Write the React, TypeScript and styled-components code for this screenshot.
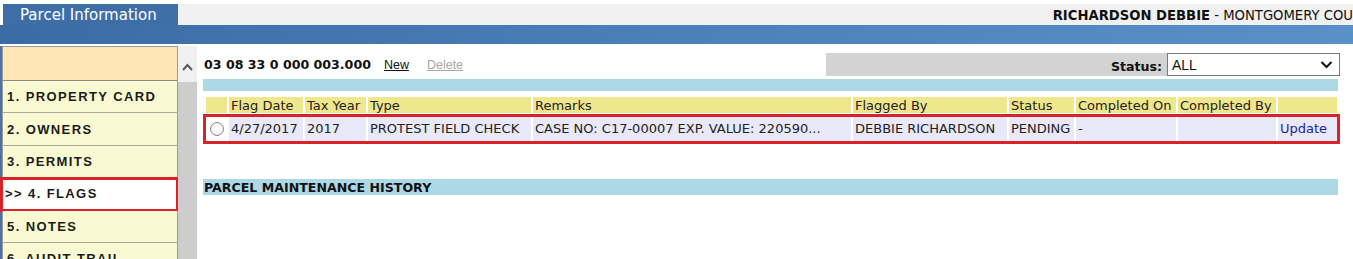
import React from "react";
import styled, { createGlobalStyle } from "styled-components";

const GlobalStyle = createGlobalStyle`
  html, body { margin: 0; padding: 0; background: #ffffff; }
  body { font-family: "DejaVu Sans", Verdana, sans-serif; overflow: hidden; }
  * { box-sizing: border-box; }
`;

const Page = styled.div`
  width: 1353px;
  height: 259px;
  overflow: hidden;
  background: #ffffff;
`;

const TopStrip = styled.div`
  display: flex;
  height: 25px;
  padding-top: 4px;
`;

const Tab = styled.div`
  flex: 0 0 175px;
  margin-left: 3px;
  background: #3d6ea6;
  color: #ffffff;
  font-size: 15px;
  line-height: 23px;
  padding-left: 17px;
  white-space: nowrap;
`;

const UserInfo = styled.div`
  flex: 1;
  background: #f0f0f0;
  text-align: right;
  font-size: 13.2px;
  line-height: 23px;
  color: #111;
  white-space: nowrap;
  b { font-weight: bold; }
`;

const Band = styled.div`
  height: 19px;
  background: linear-gradient(to right, #3b6ba4 0%, #4b80ba 50%, #5a90c9 100%);
`;

const Body = styled.div`
  display: flex;
  padding-top: 2px;
  height: 215px;
  overflow: hidden;
`;

const Sidebar = styled.div`
  flex: 0 0 178px;
  border-left: 2px solid #4a72a6;
  display: flex;
  flex-direction: column;
`;

const SideHead = styled.div`
  flex: 0 0 35px;
  background: #ffe4b5;
  border: 1px solid #9a9a9a;
  border-bottom-color: #8a8a8a;
`;

const SideItem = styled.div<{ $active?: boolean }>`
  flex: 0 0 32.4px;
  display: flex;
  align-items: center;
  padding-left: ${(p) => (p.$active ? "3px" : "4px")};
  background: ${(p) => (p.$active ? "#ffffff" : "#fafad2")};
  border-left: 1px solid #9a9a9a;
  border-right: 1px solid #9a9a9a;
  border-bottom: 1px solid #a8a8a0;
  font-family: "Liberation Sans", Arial, sans-serif;
  font-weight: bold;
  font-size: 13px;
  letter-spacing: 1.4px;
  color: #1b1b1b;
  white-space: nowrap;
  ${(p) =>
    p.$active
      ? `outline: 3px solid #d8232a; outline-offset: -2px; margin-left: -1px;`
      : ""}
`;

const Scrollbar = styled.div`
  flex: 0 0 19px;
  display: flex;
  flex-direction: column;
  background: #cdcdcd;
`;

const ScrollButton = styled.div`
  flex: 0 0 36px;
  background: #f0f0f0;
  display: flex;
  align-items: center;
  justify-content: center;
  padding-top: 6px;
`;

const ScrollThumb = styled.div`
  flex: 1;
  background: #cdcdcd;
`;

const Main = styled.div`
  flex: 0 0 1143px;
  padding-left: 6px;
  padding-top: 7px;
`;

const TopRow = styled.div`
  display: flex;
  align-items: center;
  height: 23px;
`;

const ParcelId = styled.span`
  font-weight: bold;
  font-size: 12.6px;
  color: #111;
  padding-left: 1px;
`;

const LinkText = styled.span<{ $disabled?: boolean }>`
  font-family: "Liberation Sans", Arial, sans-serif;
  font-size: 12.5px;
  text-decoration: underline;
  color: ${(p) => (p.$disabled ? "#a6a6a6" : "#111")};
  margin-left: ${(p) => (p.$disabled ? "18px" : "13px")};
`;

const StatusArea = styled.div`
  margin-left: auto;
  display: flex;
  align-items: stretch;
  height: 23px;
`;

const StatusLabelBox = styled.div`
  width: 341px;
  background: #d3d3d3;
  display: flex;
  align-items: flex-end;
  justify-content: flex-end;
  padding: 0 5px 2px 0;
  font-weight: bold;
  font-size: 12.6px;
  color: #111;
`;

const SelectBox = styled.div`
  width: 173px;
  border: 1px solid #7a7a7a;
  background: #ffffff;
  display: flex;
  align-items: center;
  justify-content: space-between;
  padding: 0 6px 0 4px;
  font-family: "Liberation Sans", Arial, sans-serif;
  font-size: 14px;
  color: #111;
`;

const BlueBar = styled.div`
  width: 1135px;
  background: #add8e6;
  margin-top: 3px;
  height: 12px;
`;

const SectionBar = styled(BlueBar)`
  height: 16px;
  margin-top: 38px;
  font-weight: bold;
  font-size: 12.6px;
  line-height: 17px;
  color: #111;
  padding-left: 1px;
`;

const cols = "21px 74px 61px 163px 318px 154px 65px 100px 98px 59px";

const Table = styled.div`
  margin-top: 6px;
  margin-left: 3px;
  width: 1131px;
  display: flex;
  flex-direction: column;
  gap: 3px;
`;

const HeaderRow = styled.div`
  display: grid;
  grid-template-columns: ${cols};
  column-gap: 2px;
  height: 16px;
`;

const HeadCell = styled.div`
  background: #f0e68c;
  font-size: 13px;
  line-height: 17px;
  padding-left: 2px;
  color: #222;
  white-space: nowrap;
  overflow: hidden;
`;

const DataRow = styled.div`
  display: grid;
  grid-template-columns: ${cols};
  column-gap: 2px;
  height: 24px;
  margin-top: 1px;
  outline: 3px solid #da2229;
  outline-offset: 0px;
`;

const DataCell = styled.div<{ $link?: boolean }>`
  background: #e8e8f8;
  font-size: 13px;
  line-height: 24px;
  padding-left: 2px;
  color: ${(p) => (p.$link ? "#1f1fa3" : "#222")};
  white-space: nowrap;
  overflow: hidden;
`;

const RadioCell = styled.div`
  background: #ffffff;
  display: flex;
  align-items: center;
  justify-content: center;
  padding-left: 1px;
`;

const Radio = styled.span`
  width: 14px;
  height: 14px;
  border-radius: 50%;
  border: 1px solid #8a8a8a;
  background: radial-gradient(circle at 50% 40%, #ffffff 0%, #f2f2f2 60%, #e0e0e0 100%);
`;

const UpChevron = () => (
  <svg width="11" height="8" viewBox="0 0 11 8">
    <path d="M1 7 L5.5 2 L10 7" fill="none" stroke="#5a5a5a" strokeWidth="2" />
  </svg>
);

const DownChevron = () => (
  <svg width="13" height="9" viewBox="0 0 13 9">
    <path d="M1.5 2 L6.5 7 L11.5 2" fill="none" stroke="#111" strokeWidth="2" />
  </svg>
);

const headers = [
  "",
  "Flag Date",
  "Tax Year",
  "Type",
  "Remarks",
  "Flagged By",
  "Status",
  "Completed On",
  "Completed By",
  "",
];

const row = [
  "4/27/2017",
  "2017",
  "PROTEST FIELD CHECK",
  "CASE NO: C17-00007 EXP. VALUE: 220590...",
  "DEBBIE RICHARDSON",
  "PENDING",
  "-",
  "",
];

const navItems = [
  "1. PROPERTY CARD",
  "2. OWNERS",
  "3. PERMITS",
  ">> 4. FLAGS",
  "5. NOTES",
  "6. AUDIT TRAIL",
];

export default function App() {
  return (
    <Page>
      <GlobalStyle />
      <TopStrip>
        <Tab>Parcel Information</Tab>
        <UserInfo>
          <b>RICHARDSON DEBBIE</b> - MONTGOMERY COU
        </UserInfo>
      </TopStrip>
      <Band />
      <Body>
        <Sidebar>
          <SideHead />
          {navItems.map((n) => (
            <SideItem key={n} $active={n.startsWith(">>")}>
              {n}
            </SideItem>
          ))}
        </Sidebar>
        <Scrollbar>
          <ScrollButton>
            <UpChevron />
          </ScrollButton>
          <ScrollThumb />
        </Scrollbar>
        <Main>
          <TopRow>
            <ParcelId>03 08 33 0 000 003.000</ParcelId>
            <LinkText>New</LinkText>
            <LinkText $disabled>Delete</LinkText>
            <StatusArea>
              <StatusLabelBox>Status:</StatusLabelBox>
              <SelectBox>
                <span>ALL</span>
                <DownChevron />
              </SelectBox>
            </StatusArea>
          </TopRow>
          <BlueBar />
          <Table>
            <HeaderRow>
              {headers.map((h, i) => (
                <HeadCell key={i}>{h}</HeadCell>
              ))}
            </HeaderRow>
            <DataRow>
              <RadioCell>
                <Radio />
              </RadioCell>
              {row.map((c, i) => (
                <DataCell key={i}>{c}</DataCell>
              ))}
              <DataCell $link>Update</DataCell>
            </DataRow>
          </Table>
          <SectionBar>PARCEL MAINTENANCE HISTORY</SectionBar>
        </Main>
      </Body>
    </Page>
  );
}
